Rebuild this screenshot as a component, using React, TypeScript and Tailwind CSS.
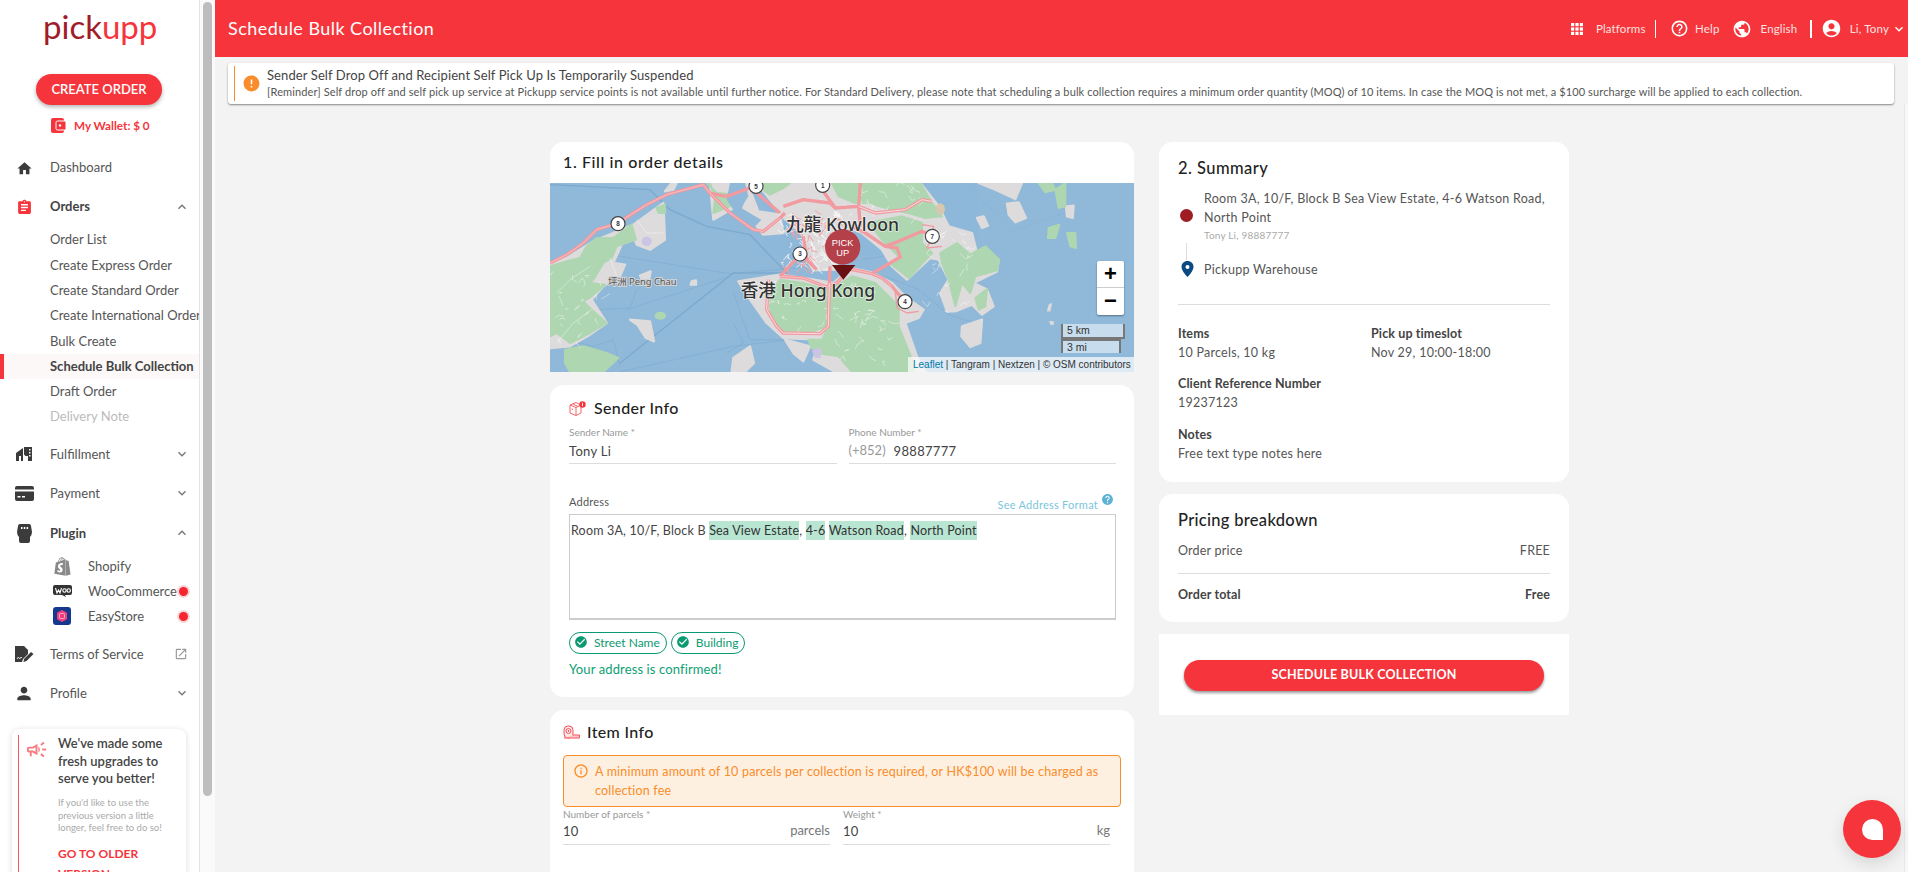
import React from "react";
import {
  MdHome, MdAssignment, MdExpandLess, MdExpandMore, MdOpenInNew, MdPerson,
  MdHelpOutline, MdPublic, MdAccountCircle, MdKeyboardArrowDown, MdError, MdCheckCircle, MdHelp,
  MdInfoOutline, MdOutlineCampaign,
} from "react-icons/md";
import { FaShopify } from "react-icons/fa";

const Top = ({ icon, label, bold, right }: { icon: React.ReactNode; label: string; bold?: boolean; right?: React.ReactNode }) => (
  <div className="flex h-[39px] items-center pl-[14px] pr-[9px]">
    <div className="flex w-[20px] items-center justify-center">{icon}</div>
    <span className={`ml-[16px] flex-1 text-[13px] ${bold ? "font-bold text-[#444]" : "text-[#555]"}`}>{label}</span>
    {right}
  </div>
);

const Sub = ({ label, active, muted }: { label: string; active?: boolean; muted?: boolean }) => (
  <div className={`flex h-[25.300px] items-center text-[13px] whitespace-nowrap ${active ? "border-l-[4px] border-[#f5353b] bg-[#fcf8f7] pl-[46px] font-bold text-[#444]" : muted ? "pl-[50px] text-[#bbb]" : "pl-[50px] text-[#555]"}`}>
    {label}
  </div>
);

const Plug = ({ icon, label, dot }: { icon: React.ReactNode; label: string; dot?: boolean }) => (
  <div className="flex h-[25px] items-center pl-[52px] pr-[11px]">
    <div className="flex w-[20px] items-center justify-center">{icon}</div>
    <span className="ml-[16px] flex-1 text-[13px] text-[#555]">{label}</span>
    {dot && <span className="h-[9px] w-[9px] rounded-full bg-[#f5262f] shadow-[0_0_0_2px_#fbd5d6]" />}
  </div>
);

const Sidebar = () => (
  <aside className="flex h-full w-[200px] shrink-0 flex-col overflow-hidden border-r border-[#e4e4e4] bg-white [&>*]:shrink-0">
    <div className="h-[57px] pl-[43px] pt-[3px] text-[33px] leading-[46px]">
      <span className="text-[#a01c28]">pick</span>
      <span className="text-[#f5353b]">upp</span>
    </div>
    <button className="ml-[36px] mt-[17px] h-[31px] w-[126px] rounded-full bg-[#f5353b] text-[13px] font-semibold text-white shadow-[0_2px_4px_rgba(0,0,0,0.3)]">
      CREATE ORDER
    </button>
    <div className="ml-[51px] mt-[13px] flex h-[15px] items-center">
      <svg width="15" height="15" viewBox="0 0 15 15">
        <rect x="0" y="0" width="13" height="15" rx="2" fill="#f5353b" />
        <rect x="5" y="3" width="10" height="9" rx="1.5" fill="#f5353b" stroke="#fff" strokeWidth="1" />
        <circle cx="9" cy="7.5" r="1.2" fill="#fff" />
      </svg>
      <span className="ml-[8px] text-[11.700px] font-bold text-[#f5353b]">My Wallet: $ 0</span>
    </div>
    <div className="h-[15.500px]" />
    <Top icon={<MdHome size={17} color="#3b3b3b" />} label="Dashboard" />
    <Top icon={<MdAssignment size={17} color="#f5353b" />} label="Orders" bold right={<MdExpandLess size={16} color="#777" />} />
    <div className="h-px" />
    <Sub label="Order List" />
    <Sub label="Create Express Order" />
    <Sub label="Create Standard Order" />
    <Sub label="Create International Order" />
    <Sub label="Bulk Create" />
    <Sub label="Schedule Bulk Collection" active />
    <Sub label="Draft Order" />
    <Sub label="Delivery Note" muted />
    <div className="h-[5px]" />
    <Top
      icon={
        <svg width="16" height="14" viewBox="0 0 16 14" fill="#3b3b3b">
          <path d="M0 6 7 1v13H5V9H3v5H0zM8 0h8v14h-4V9H9.5L8 7.5z" />
          <path d="M13 2h1.5v1.5H13zM13 5h1.5v1.5H13zM13 8h1.5v1.5H13z" fill="#fff" />
        </svg>
      }
      label="Fulfillment"
      right={<MdExpandMore size={16} color="#777" />}
    />
    <Top
      icon={
        <svg width="19" height="15" viewBox="0 0 19 15">
          <rect width="19" height="15" rx="2" fill="#3b3b3b" />
          <rect y="3.500" width="19" height="2" fill="#fff" />
          <rect x="2.500" y="10" width="3" height="1.500" fill="#fff" />
          <rect x="7" y="10" width="3" height="1.500" fill="#fff" />
        </svg>
      }
      label="Payment"
      right={<MdExpandMore size={16} color="#777" />}
    />
    <div className="h-[1px]" />
    <Top
      icon={
        <svg width="15" height="19" viewBox="0 0 15 19">
          <path d="M1 2q0-2 2-2h9q2 0 2 2l1 6q0 3-2 5v4q0 2-2 2H4q-2 0-2-2v-4Q0 11 0 8z" fill="#3b3b3b" />
          <path d="M4 3h1.5v2H4zM6.8 3h1.5v2H6.8zM9.6 3h1.5v2H9.6z" fill="#fff" />
        </svg>
      }
      label="Plugin"
      bold
      right={<MdExpandLess size={16} color="#777" />}
    />
    <div className="h-[1px]" />
    <Plug icon={<FaShopify size={19} color="#8a8a8a" />} label="Shopify" />
    <Plug
      icon={
        <svg width="19" height="12" viewBox="0 0 19 12">
          <path d="M2 0h15a2 2 0 0 1 2 2v6a2 2 0 0 1-2 2h-5l1 2-4-2H2a2 2 0 0 1-2-2V2a2 2 0 0 1 2-2z" fill="#333" />
          <path d="M2.5 3 4 8l1.5-3L7 8l1.5-5" stroke="#fff" strokeWidth="1.1" fill="none" />
          <circle cx="11.5" cy="5.5" r="1.7" stroke="#fff" strokeWidth="1.1" fill="none" />
          <circle cx="15.7" cy="5.5" r="1.7" stroke="#fff" strokeWidth="1.1" fill="none" />
        </svg>
      }
      label="WooCommerce"
      dot
    />
    <Plug
      icon={
        <svg width="18" height="18" viewBox="0 0 18 18">
          <rect width="18" height="18" rx="3" fill="#17388f" />
          <path d="M9 3l5 2.8v6.4L9 15l-5-2.8V5.800z" fill="#f43f7f" />
          <rect x="6.500" y="6.500" width="5" height="5" rx="1" fill="none" stroke="#fbc4d8" strokeWidth="0.8" />
        </svg>
      }
      label="EasyStore"
      dot
    />
    <div className="h-[6px]" />
    <Top
      icon={
        <svg width="19" height="17" viewBox="0 0 19 17" fill="#3b3b3b">
          <path d="M0 0h9l4 4v4l-5 5-1 3H0z" />
          <path d="M2 13q1-3 2-1t2-1l1 1" stroke="#fff" strokeWidth="0.8" fill="none" />
          <path d="M9 13l7-7 2.500 2-7 7-3 1z" />
        </svg>
      }
      label="Terms of Service"
      right={<MdOpenInNew size={14} color="#999" className="mr-[2px]" />}
    />
    <Top icon={<MdPerson size={21} color="#3b3b3b" />} label="Profile" right={<MdExpandMore size={16} color="#777" />} />
    <div className="ml-[12px] mt-[16.500px] w-[174px] rounded-t-[8px] pl-[6px] pt-[6px] shadow-[0_1px_6px_rgba(0,0,0,0.14)]">
      <div className="flex border-l border-[#f5555b] pb-[20px]">
        <div className="ml-[8px] w-[21px] shrink-0 pt-[3px]">
          <MdOutlineCampaign size={23} color="#f57c80" className="-ml-[2px]" />
        </div>
        <div className="ml-[10px] w-[112px]">
          <p className="text-[13px] font-semibold leading-[17.5px] text-[#444]">We've made some fresh upgrades to serve you better!</p>
          <p className="mt-[9px] text-[9.5px] leading-[12.7px] text-[#aaa]">If you'd like to use the previous version a little longer, feel free to do so!</p>
          <p className="mt-[9px] text-[12px] font-bold leading-[20px] text-[#f5353b]">GO TO OLDER VERSION</p>
        </div>
      </div>
    </div>
  </aside>
);

const Header = () => (
  <header className="flex h-[57px] shrink-0 items-center bg-[#f5353b] pl-[13px] text-white">
    <h1 className="flex-1 text-[18px] tracking-[0.45px]">Schedule Bulk Collection</h1>
    <svg width="12" height="12" viewBox="0 0 12 12" fill="#fff">
      {[0, 4.4, 8.8].map((x) => [0, 4.4, 8.8].map((y) => <rect key={`${x}-${y}`} x={x} y={y} width="3.2" height="3.2" />))}
    </svg>
    <span className="ml-[13px] text-[11.500px] tracking-[0.15px] text-[#fde0e0]">Platforms</span>
    <span className="ml-[9px] h-[18px] w-[1.500px] bg-white" />
    <MdHelpOutline size={19} className="ml-[14px]" />
    <span className="ml-[6px] text-[11.500px] tracking-[0.15px] text-[#fde0e0]">Help</span>
    <MdPublic size={20} className="ml-[12px]" />
    <span className="ml-[9px] text-[11.500px] tracking-[0.15px] text-[#fde0e0]">English</span>
    <span className="ml-[13px] h-[18px] w-[1.500px] bg-white" />
    <MdAccountCircle size={21} className="ml-[9px]" />
    <span className="ml-[8px] text-[11.500px] tracking-[0.15px] text-[#fde0e0]">Li, Tony</span>
    <MdKeyboardArrowDown size={16} className="ml-[2px] mr-[1px]" />
  </header>
);

const Alert = () => (
  <div className="ml-[13px] mr-[14px] mt-[6px] flex h-[41px] shrink-0 items-center rounded-[3px] bg-white pl-[6px] shadow-[0_1px_2px_rgba(0,0,0,0.45)]">
    <span className="h-[35px] w-px bg-[#f98c2b]" />
    <MdError size={19} color="#f98c2b" className="ml-[7px]" />
    <div className="-mt-[2px] ml-[6px]">
      <p className="text-[13px] leading-[17px] tracking-[0.1px] text-[#444]">Sender Self Drop Off and Recipient Self Pick Up Is Temporarily Suspended</p>
      <p className="text-[11px] leading-[15px] tracking-[0.115px] whitespace-nowrap text-[#555]">
        [Reminder] Self drop off and self pick up service at Pickupp service points is not available until further notice. For Standard Delivery, please note that scheduling a bulk collection requires a minimum order quantity (MOQ) of 10 items. In case the MOQ is not met, a $100 surcharge will be applied to each collection.
      </p>
    </div>
  </div>
);

const Route = ({ x, y, n }: { x: number; y: number; n: string }) => (
  <g>
    <circle cx={x} cy={y} r="21" fill="#fff" stroke="#444" strokeWidth="3.500" />
    <text x={x} y={y + 7} textAnchor="middle" fontSize="19" fontWeight="700" fill="#333" fontFamily="'Liberation Sans',sans-serif">{n}</text>
  </g>
);

const mesh = (x: number, y: number, w: number, h: number, n: number, seed: number, len = 36) => {
  let s = seed;
  const r = () => (s = (s * 16807) % 2147483647) / 2147483647;
  let d = "";
  for (let i = 0; i < n; i++) {
    d += `M${(x + r() * w).toFixed(0)} ${(y + r() * h).toFixed(0)}l${((r() - 0.5) * len).toFixed(0)} ${((r() - 0.5) * len).toFixed(0)}l${((r() - 0.5) * len).toFixed(0)} ${((r() - 0.5) * len).toFixed(0)}`;
  }
  return d;
};

const R = 876;
const MapArt = () => (
  <svg viewBox="0 0 1752 567" preserveAspectRatio="none" className="absolute inset-0 h-full w-full">
    <rect width="1752" height="567" fill="#8fb8d9" />
    <g fill="none" stroke="#7da9cd" strokeWidth="2.500">
      <path d="M0 5 300 20l60 60 110 50 130 25 110 115-160 0-340 270" strokeWidth="4" />
      <path d="M210 220 540 272 800 250 1000 220" strokeWidth="1.500" />
      <path d="M230 380 540 280M140 380 240 375 260 320M550 330 600 470 720 470 550 490 210 567" strokeWidth="1.500" />
      <path d={`M${R + 130} 280 ${R + 230} 320 ${R + 320} 395 ${R + 400} 420`} strokeWidth="1.500" />
      <path d={`M${R + 370} 0 ${R + 510} 145 ${R + 670} 90`} strokeWidth="1" strokeDasharray="3 3" />
      <path d="M50 470 130 490 190 470 210 550M550 420 580 480 530 510" strokeWidth="1.500" />
    </g>
    <g fill="#dddbdb" stroke="#dddbdb" strokeWidth="7" strokeLinejoin="round">
      <path d="M0 240 50 225 130 175 250 125 340 60 345 170 300 200 260 185 240 130 190 240 225 245 210 280 160 310 125 350 170 420 120 455 60 490 0 495z" />
      <path d="M345 25 365 0 380 0 370 20z" />
      <path d="M480 0 490 110 560 70 600 20 600 0z" />
      <path d="M600 20 625 85 690 95 700 150 640 155 620 130 640 110 580 75z" />
      <path d={`M620 0 ${R + 235} 0 ${R + 290} 70 ${R + 320} 130 ${R + 390} 150 ${R + 405} 210 ${R + 470} 230 ${R + 465} 265 ${R + 395} 300 ${R + 435} 320 ${R + 455} 370 ${R + 420} 395 ${R + 390} 365 ${R + 340} 385 ${R + 315} 385 ${R + 295} 330 ${R + 320} 290 ${R + 290} 230 ${R + 265} 225 ${R + 195} 290 ${R + 150} 250 ${R + 120} 200 ${R + 60} 150 ${R + 20} 135 ${R - 20} 260 790 262 760 215 760 160 700 100z`} />
      <path d={`M565 295 690 275 760 285 850 300 ${R + 24} 255 ${R + 90} 268 ${R + 150} 300 ${R + 195} 345 ${R + 245} 380 ${R + 230} 405 ${R + 190} 420 ${R + 225} 520 ${R + 250} 567 ${R - 20} 567 790 530 810 470 700 465 650 420 600 350z`} />
      <path d="M240 410 300 415 312 475 288 465 262 425z" />
      <path d="M550 525 600 490 612 540 585 567 545 567z" />
      <path d="M705 470 780 490 760 535 730 510z" />
      <path d="M425 295 438 292 438 305 422 305zM270 278 302 265 298 285 275 288z" />
      <path d={`M${R + 360} 430 ${R + 420} 410 ${R + 415} 480 ${R + 385} 492 ${R + 358} 460z`} />
      <path d={`M${R + 495} 62 ${R + 530} 58 ${R + 552} 105 ${R + 520} 118 ${R + 500} 95z`} />
      <path d={`M${R + 405} 105 ${R + 425} 100 ${R + 438} 128 ${R + 420} 135z`} />
      <path d={`M${R + 672} 70 ${R + 695} 68 ${R + 692} 105 ${R + 675} 100zM${R + 410} 0 ${R + 540} 0 ${R + 520} 48 ${R + 460} 20z`} />
      <path d={`M${R + 620} 365 ${R + 630} 360 ${R + 625} 385 ${R + 615} 385zM${R + 622} 415 ${R + 635} 415 ${R + 635} 425 ${R + 625} 425z`} strokeWidth="1" />
    </g>
    <g fill="#aed6b1" stroke="#aed6b1" strokeWidth="6" strokeLinejoin="round">
      <path d="M0 250 50 235 90 225 110 190 140 165 190 165 245 125 258 170 200 190 185 225 160 240 130 290 120 300 165 305 125 340 100 355 130 385 170 420 120 450 60 480 20 450 0 460z" />
      <path d="M45 500 100 490 170 510 205 525 160 567 60 567 45 540z" />
      <ellipse cx="331" cy="398" rx="14" ry="9" />
      <path d="M320 75 345 65 345 90 325 90z" />
      <path d="M480 0 495 50 490 90 540 70 560 35 500 30 470 0z" />
      <path d="M650 0 610 0 660 35 700 15 720 0z" />
      <path d={`M${R - 30} 0 ${R + 235} 0 ${R + 270} 60 ${R + 300} 100 ${R + 250} 105 ${R + 200} 90 ${R + 150} 80 ${R + 80} 60 ${R + 40} 60 ${R - 10} 40z`} />
      <path d={`M${R + 80} 120 ${R + 180} 100 ${R + 240} 120 ${R + 240} 180 ${R + 270} 210 ${R + 200} 285 ${R + 150} 245 ${R + 170} 220 ${R + 120} 170z`} />
      <path d={`M${R + 295} 210 ${R + 345} 180 ${R + 385} 215 ${R + 430} 190 ${R + 472} 230 ${R + 465} 262 ${R + 400} 280 ${R + 385} 330 ${R + 360} 300 ${R + 340} 370 ${R + 320} 290 ${R + 300} 240z`} />
      <path d={`M${R + 400} 345 ${R + 435} 318 ${R + 430} 370 ${R + 410} 380z`} />
      <path d="M655 340 690 290 760 300 830 320 830 430 790 445 700 445 665 400z" />
      <path d={`M840 320 ${R + 30} 280 ${R + 100} 300 ${R + 170} 370 ${R + 170} 430 ${R + 210} 530 ${R + 215} 567 ${R + 30} 567 ${R - 10} 520 800 510 830 440z`} />
      <path d="M775 470 815 470 810 495 785 495z" />
      <path d={`M${R + 590} 0 ${R + 630} 0 ${R + 640} 20 ${R + 610} 28zM${R + 640} 20 ${R + 670} 0 ${R + 670} 70 ${R + 650} 75zM${R + 620} 135 ${R + 652} 125 ${R + 640} 165 ${R + 618} 165zM${R + 675} 150 ${R + 700} 150 ${R + 702} 195 ${R + 685} 190z`} />
    </g>
    <ellipse cx="290" cy="175" rx="15" ry="14" fill="#cbc4e4" />
    <path d="M785 500 815 495 812 525 795 525z" fill="#cbc4e4" />
    <ellipse cx={R + 295} cy="78" rx="14" ry="17" fill="#d7c7ae" />
    <path d={`M${R - 20} 215 ${R + 20} 150 ${R + 90} 210 ${R + 60} 230 ${R + 0} 240z`} fill="#8fb8d9" />
    <path d="M540 0 585 0 595 40 560 95 530 50z" fill="#8fb8d9" />
    <g fill="none" stroke="#fff" strokeWidth="1.500" opacity="0.85">
      <path d="M20 330 60 290 120 250M20 480 70 420 125 380M180 225 200 280M260 110 290 150 340 150" />
      <path d={mesh(660, 300, 170, 140, 16, 11, 30)} />
      <path d={mesh(850, 300, 170, 240, 34, 23, 36)} />
      <path d={mesh(R + 240, 120, 180, 270, 26, 37, 36)} />
      <path d={mesh(R - 20, 0, 280, 110, 22, 51, 36)} />
      <path d={mesh(10, 260, 150, 220, 22, 61, 30)} />
      <path d={mesh(700, 90, 170, 170, 110, 7, 30)} strokeWidth="2.500" />
    </g>
    <path d={mesh(705, 95, 160, 165, 34, 91, 44)} fill="none" stroke="#f4a1a5" strokeWidth="3" />
    <g fill="none" stroke="#f19aa0" strokeWidth="10" strokeLinejoin="round">
      <path d="M0 240 50 215 100 180 140 140 205 120 250 90 290 65 350 35 460 5 475 25 540 90 610 140 640 145 690 105 705 90" />
      <path d="M475 30 530 40 600 15M620 30 690 90M690 280 750 215" />
      <path d={`M690 280 760 285 830 312 860 300 ${R + 24} 258 ${R + 90} 272 ${R + 120} 285 ${R + 150} 310 ${R + 162} 325 ${R + 188} 355`} />
      <path d="M655 290 650 380 680 430 700 450 810 452 835 430 838 300 840 250" />
      <path d={`M${R + 90} 272 ${R + 175} 222 ${R + 165} 195 ${R + 130} 190 ${R + 70} 150 ${R + 30} 130M${R + 130} 190 ${R + 170} 175 ${R + 240} 145 ${R + 270} 160`} />
      <path d={`M${R + 55} 0 ${R + 50} 70 ${R + 55} 130M${R + 50} 70 ${R + 100} 90 ${R + 190} 80 ${R + 240} 50 ${R + 270} 55M${R + 50} 70 ${R - 20} 75 ${R - 60} 20 ${R - 50} 0M700 70 760 50 840 60 ${R - 20} 75`} />
      <path d="M760 160 770 230 800 260" />
      <path d={`M${R + 240} 125 ${R + 275} 130 ${R + 270} 160 ${R + 255} 195 ${R + 300} 190M${R + 160} 325 ${R + 165} 375 ${R + 195} 390 ${R + 230} 385`} strokeWidth="4" />
    </g>
    <g fill="none" stroke="#fbd2d4" strokeWidth="2">
      <path d="M0 240 50 215 100 180 140 140 205 120 250 90 290 65 350 35 460 5 475 25 540 90 610 140 640 145 690 105" />
      <path d="M655 290 650 380 680 430 700 450 810 452 835 430 838 300" stroke="#fff" />
      <path d={`M${R + 50} 70 ${R + 100} 90 ${R + 190} 80 ${R + 240} 50 ${R + 270} 55`} stroke="#fff" />
      <path d={`M690 280 760 285 830 312 860 300 ${R + 24} 258 ${R + 90} 272 ${R + 120} 285 ${R + 150} 310`} />
    </g>
    <Route x={618} y={10} n="5" />
    <Route x={818} y={7} n="1" />
    <Route x={204} y={122} n="8" />
    <Route x={750} y={213} n="3" />
    <Route x={R + 271} y={160} n="7" />
    <Route x={R + 189} y={356} n="4" />
    <g fontFamily="'Noto Sans','Noto Sans CJK TC',sans-serif" style={{ paintOrder: "stroke" }}>
      <text x="174" y="305" fontSize="28" fill="#555" stroke="#d4d4d4" strokeWidth="6">坪洲 Peng Chau</text>
      <text x="708" y="143" fontSize="53" fontWeight="500" fill="#333" stroke="#ffffff99" strokeWidth="5">九龍 Kowloon</text>
      <text x="572" y="343" fontSize="53" fontWeight="500" fill="#333" stroke="#ffffff99" strokeWidth="5">香港 Hong Kong</text>
    </g>
    <path d="M846 246 916 246 880 290z" fill="#681012" />
    <circle cx="878" cy="192" r="53" fill="#b4404a" />
    <text x="878" y="190" textAnchor="middle" fontSize="28" fill="#fff" fontFamily="'Liberation Sans',sans-serif">PICK</text>
    <text x="878" y="218" textAnchor="middle" fontSize="28" fill="#fff" fontFamily="'Liberation Sans',sans-serif">UP</text>
  </svg>
);

const MapCard = () => (
  <div className="overflow-hidden rounded-t-[14px] bg-white">
    <h2 className="flex h-[41px] items-center pb-[2px] pl-[13px] text-[16px] font-medium tracking-[0.6px] text-[#222]">1. Fill in order details</h2>
    <div className="relative h-[189px] font-['Liberation_Sans',sans-serif]">
      <MapArt />
      <div className="absolute right-[10px] top-[78px] flex h-[54px] w-[27px] flex-col rounded-[2px] bg-white text-[22px] font-bold leading-[26px] text-black shadow-[0_1px_2px_rgba(0,0,0,0.4)]">
        <div className="h-[27px] border-b border-[#ccc] text-center">+</div>
        <div className="text-center">−</div>
      </div>
      <div className="absolute right-[9px] top-[141px] h-[15px] w-[64px] border-x-2 border-b-2 border-[#777] bg-white/50 pl-[4px] text-[10.500px] leading-[13px] text-[#333]">5 km</div>
      <div className="absolute right-[13px] top-[156px] h-[14px] w-[60px] border-x-2 border-t-2 border-[#777] bg-white/50 pl-[4px] text-[10.500px] leading-[13px] text-[#333]">3 mi</div>
      <div className="absolute bottom-0 right-0 h-[15px] w-[226px] whitespace-nowrap bg-white/70 pl-[5px] text-[10px] leading-[15px] text-[#333]">
        <span className="text-[#0078a8]">Leaflet</span> | Tangram | Nextzen | © OSM contributors
      </div>
    </div>
  </div>
);

const Field = ({ label, value, prefix, unit, tall }: { label: string; value: string; prefix?: string; unit?: string; tall?: boolean }) => (
  <div className="flex-1">
    <div className="h-[13px] text-[10px] leading-[13px] text-[#999]">{label}</div>
    <div className={`flex items-center border-b border-[#ddd] text-[13px] text-[#444] ${tall ? "h-[25px] pt-[3px]" : "h-[24px]"}`}>
      {prefix && <span className="mr-[8px] -translate-y-[1px] text-[#999]">{prefix}</span>}
      <span className="flex-1 tracking-[0.3px]">{value}</span>
      {unit && <span className="-translate-y-[1px] text-[#777]">{unit}</span>}
    </div>
  </div>
);

const Mark = ({ children }: { children: string }) => <span className="bg-[#b8e6d2] py-[2px] text-[#333]">{children}</span>;

const Chip = ({ label }: { label: string }) => (
  <span className="flex h-[22px] items-center rounded-full border border-[#0a9a72] pl-[4px] pr-[6px] text-[12px] text-[#0a9a72]">
    <MdCheckCircle size={14} className="-translate-y-[1px]" />
    <span className="ml-[6px]">{label}</span>
  </span>
);

const SenderCard = () => (
  <section className="mt-[13px] h-[312px] shrink-0 rounded-[14px] bg-white pl-[19px] pr-[18px]">
    <div className="flex h-[40.500px] items-center pt-[6px]">
      <svg width="17" height="15" viewBox="0 0 17 15" fill="none" stroke="#f5535a" strokeWidth="0.900">
        <path d="M1 4l6-2.500 5 2.500v8l-5 2.500L1 12z" />
        <path d="M1 4l6 2.500L12 4M7 6.500v8M4 3l5 2.500M4 8.500l-1.500-.500" />
        <circle cx="13.500" cy="3.500" r="3.200" fill="#f5353b" stroke="none" />
        <path d="M13.500 1.800v3.400" stroke="#fff" />
      </svg>
      <h3 className="ml-[8px] text-[16px] font-medium tracking-[0.35px] text-[#222]">Sender Info</h3>
    </div>
    <div className="flex gap-[12px]">
      <Field label="Sender Name *" value="Tony Li" tall />
      <Field label="Phone Number *" value="98887777" prefix="(+852)" tall />
    </div>
    <div className="mt-[31.500px] flex h-[19px] items-start justify-between">
      <span className="text-[11px] leading-[14px] tracking-[0.2px] text-[#555]">Address</span>
      <span className="flex items-start pr-[2px]">
        <span className="mt-[3px] text-[11px] leading-[14px] tracking-[0.25px] text-[#7cc5dc]">See Address Format</span>
        <MdHelp size={13} color="#5eb3d4" className="-mt-[2px] ml-[3px]" />
      </span>
    </div>
    <div className="h-[106px] border border-b-2 border-[#ccc] pl-px pt-[7px] text-[12.500px] leading-[17px] tracking-[0.19px] text-[#444]">
      Room 3A, 10/F, Block B <Mark>Sea View Estate</Mark>, <Mark>4-6</Mark> <Mark>Watson Road</Mark>, <Mark>North Point</Mark>
    </div>
    <div className="mt-[12px] flex gap-[4px]">
      <Chip label="Street Name" />
      <Chip label="Building" />
    </div>
    <p className="mt-[7px] text-[13px] leading-[17px] tracking-[0.12px] text-[#0ea074]">Your address is confirmed!</p>
  </section>
);

const ItemCard = () => (
  <section className="mt-[13px] flex-1 rounded-t-[14px] bg-white px-[13px]">
    <div className="flex h-[45px] items-center pb-[1px]">
      <svg width="17" height="14" viewBox="0 0 17 14" fill="none" stroke="#f5535a" strokeWidth="1">
        <rect x="1" y="1" width="9" height="12" rx="4" fill="#fde8e8" />
        <circle cx="5.500" cy="6" r="2.500" />
        <path d="M5.500 5v2" />
        <path d="M10 10h6.500v3H1" fill="#fbc9cb" />
      </svg>
      <h3 className="ml-[7px] text-[16px] font-medium tracking-[0.35px] text-[#222]">Item Info</h3>
    </div>
    <div className="flex h-[52px] rounded-[4px] border border-[#f98c2b] bg-[#fef0e0] pl-[9px] pr-[10px] pt-[6px] text-[12.500px] leading-[19px] tracking-[0.2px] text-[#f98c2b]">
      <MdInfoOutline size={16} className="mt-px shrink-0" />
      <p className="ml-[6px]">A minimum amount of 10 parcels per collection is required, or HK$100 will be charged as collection fee</p>
    </div>
    <div className="mt-[0.500px] flex gap-[13px] pr-[11px]">
      <Field label="Number of parcels *" value="10" unit="parcels" />
      <Field label="Weight *" value="10" unit="kg" />
    </div>
  </section>
);

const Kv = ({ k, v, className }: { k: string; v: string; className?: string }) => (
  <div className={className}>
    <div className="text-[12.500px] font-bold leading-[19px] tracking-[0.12px] text-[#444]">{k}</div>
    <div className="text-[12.500px] leading-[19px] tracking-[0.25px] text-[#555]">{v}</div>
  </div>
);

const Summary = () => (
  <section className="h-[340px] rounded-[14px] bg-white px-[19px]">
    <h2 className="flex h-[46.500px] items-center pt-[6px] text-[16.500px] font-medium tracking-[0.45px] text-[#222]">2. Summary</h2>
    <div className="flex">
      <div className="flex w-[26px] shrink-0 flex-col items-start pl-[2px]">
        <span className="mt-[20px] h-[13px] w-[13px] rounded-full bg-[#a01c24]" />
        <span className="ml-[6px] mt-[21.500px] h-[17px] w-px bg-[#ddd]" />
        <svg width="13" height="16" viewBox="0 0 13 16" className="ml-px mt-[1px]">
          <path d="M6.500 0C3 0 .5 2.500.500 6c0 4 6 10 6 10s6-6 6-10C12.500 2.500 10 0 6.500 0z" fill="#0a4a80" />
          <circle cx="6.500" cy="6" r="2" fill="#fff" />
        </svg>
      </div>
      <div>
        <p className="text-[12.500px] leading-[19px] tracking-[0.28px] text-[#555]">Room 3A, 10/F, Block B Sea View Estate, 4-6 Watson Road, North Point</p>
        <p className="mt-[1px] text-[10px] leading-[15px] tracking-[0.2px] text-[#aaa]">Tony Li, 98887777</p>
        <p className="mt-[17px] text-[12.500px] leading-[19px] tracking-[0.28px] text-[#555]">Pickupp Warehouse</p>
      </div>
    </div>
    <div className="mt-[25.500px] h-px bg-[#ddd]" />
    <div className="mt-[19px] flex">
      <Kv k="Items" v="10 Parcels, 10 kg" className="w-[193px]" />
      <Kv k="Pick up timeslot" v="Nov 29, 10:00-18:00" />
    </div>
    <Kv k="Client Reference Number" v="19237123" className="mt-[12px]" />
    <Kv k="Notes" v="Free text type notes here" className="mt-[13px]" />
  </section>
);

const Pricing = () => (
  <section className="mt-[12px] h-[128px] rounded-[14px] bg-white px-[19px]">
    <h2 className="flex h-[46.500px] items-center pt-[6px] text-[16.500px] font-medium tracking-[0.3px] text-[#222]">Pricing breakdown</h2>
    <div className="flex justify-between text-[12.500px] leading-[19px] tracking-[0.2px] text-[#555]">
      <span>Order price</span>
      <span>FREE</span>
    </div>
    <div className="mt-[13.500px] h-px bg-[#ddd]" />
    <div className="mt-[11px] flex justify-between text-[12.500px] font-bold leading-[19px] tracking-[0.12px] text-[#444]">
      <span>Order total</span>
      <span>Free</span>
    </div>
  </section>
);

export default function App() {
  return (
    <div className="relative flex h-[872px] w-[1908px] overflow-hidden bg-[#f3f3f3] font-['Lato','Noto_Sans',sans-serif]">
      <Sidebar />
      <div className="h-full w-[15px] shrink-0 bg-[#fafafa] px-[3px] pt-[2px]">
        <div className="h-[794px] rounded-full bg-[#bdbdbd]" />
      </div>
      <main className="flex h-full min-w-0 flex-1 flex-col">
        <Header />
        <Alert />
        <div className="flex min-h-0 flex-1">
          <div className="flex flex-1 pl-[335px] pt-[38px]">
            <div className="flex w-[584px] shrink-0 flex-col">
              <MapCard />
              <SenderCard />
              <ItemCard />
            </div>
            <div className="ml-[25px] w-[410px] shrink-0">
              <Summary />
              <Pricing />
              <div className="mt-[12px] h-[81px] bg-white px-[25px] pt-[26px]">
                <button className="h-[31px] w-full rounded-full bg-[#f5353b] text-[12.500px] font-bold tracking-[0.2px] text-white shadow-[0_2px_3px_rgba(0,0,0,0.4)]">
                  SCHEDULE BULK COLLECTION
                </button>
              </div>
            </div>
          </div>
          <div className="w-[4px] shrink-0 border-l border-[#e8e8e8] bg-[#f8f8f8]" />
        </div>
      </main>
      <button className="absolute left-[1843px] top-[800px] flex h-[58px] w-[58px] items-center justify-center rounded-full bg-[#f5353b] shadow-[0_6px_16px_rgba(0,0,0,0.12)]" aria-label="chat">
        <span className="block h-[21px] w-[21px] rounded-[50%_50%_0_50%] bg-white" />
      </button>
    </div>
  );
}
